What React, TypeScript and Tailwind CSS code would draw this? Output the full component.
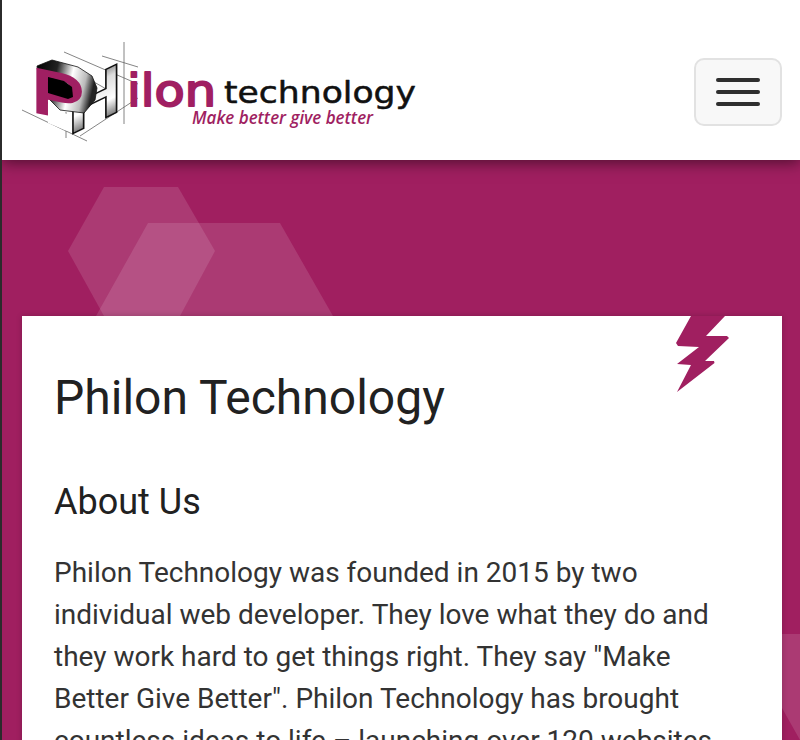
const bodyText =
  'Philon Technology was founded in 2015 by two individual web developer. They love what they do and they work hard to get things right. They say "Make Better Give Better". Philon Technology has brought countless ideas to life – launching over 120 websites and many more applications for clients all over the world.';

const Logo = () => (
  <svg width="400" height="110" viewBox="20 37 400 110" className="block">
    <defs>
      <linearGradient id="chrome" x1="0" y1="0" x2="1" y2="0.2">
        <stop offset="0" stopColor="#000" />
        <stop offset="0.35" stopColor="#222" />
        <stop offset="0.62" stopColor="#fff" />
        <stop offset="0.85" stopColor="#bbb" />
        <stop offset="1" stopColor="#222" />
      </linearGradient>
      <linearGradient id="post" x1="0" y1="0" x2="0" y2="1">
        <stop offset="0" stopColor="#333" />
        <stop offset="0.3" stopColor="#ddd" />
        <stop offset="0.6" stopColor="#fff" />
        <stop offset="0.85" stopColor="#666" />
        <stop offset="1" stopColor="#000" />
      </linearGradient>
    </defs>
    {/* construction lines */}
    <g stroke="#666" strokeWidth="0.8">
      <line x1="124" y1="42" x2="124" y2="124" />
      <line x1="64" y1="52" x2="138" y2="84" />
      <line x1="102" y1="56" x2="138" y2="67" />
      <line x1="22" y1="110" x2="87" y2="141" />
      <line x1="66" y1="112" x2="66" y2="138" />
      <line x1="80" y1="136" x2="138" y2="98" />
      <line x1="94" y1="82" x2="108" y2="90" />
    </g>
    {/* 3D H */}
    <text
      transform="translate(68 136) skewY(-26) scale(1.06 1)"
      fontFamily="'Liberation Sans', sans-serif"
      fontWeight="700"
      fontSize="70"
      fill="url(#post)"
      stroke="#111"
      strokeWidth="1.6"
    >
      H
    </text>
    {/* P extrusion, face, counter */}
    <polygon points="37,66 52,60 78,67 92,76 97,88 95,100 84,113 60,110 40,90" fill="url(#chrome)" stroke="#111" strokeWidth="0.8" />
    <polygon points="48,108 67,114 67,131 48,123" fill="#fff" />
    <text
      transform="translate(31 112) skewY(12) scale(1.22 1)"
      fontFamily="'Liberation Sans', sans-serif"
      fontWeight="700"
      fontSize="66"
      fill="#a01f62"
    >
      P
    </text>
    <polygon points="48,77 64,81 72,87 73,97 68,99 48,93" fill="#000" />
    <g fontFamily="'DejaVu Sans', sans-serif">
      <text x="127" y="106" fontSize="44" fill="#a01f62" stroke="#a01f62" strokeWidth="2" strokeLinejoin="round" textLength="89" lengthAdjust="spacingAndGlyphs">
        ilon
      </text>
      <text x="224" y="103" fontSize="30" fill="#111" stroke="#111" strokeWidth="0.5" strokeLinejoin="round" textLength="192" lengthAdjust="spacingAndGlyphs">
        technology
      </text>
    </g>
    <text x="192" y="124" fontFamily="'Open Sans', sans-serif" fontStyle="italic" fontWeight="600" fontSize="18" fill="#a01f62" textLength="181" lengthAdjust="spacingAndGlyphs">
      Make better give better
    </text>
  </svg>
);

export default function App() {
  return (
    <div className="relative h-[740px] overflow-hidden border-l-2 border-[#2b2b2b] font-['Roboto',sans-serif]">
      <header className="relative z-10 flex h-40 items-center justify-between bg-white pl-[18px] pr-[18px] pt-6 shadow-[0_3px_14px_rgba(0,0,0,0.5)]">
        <Logo />
        <button className="flex h-[68px] w-[88px] flex-col items-center justify-center gap-2 rounded-[10px] border-2 border-[#e2e2e2] bg-[#f8f8f8]">
          <span className="h-1 w-11 rounded-full bg-[#2f2f2f]" />
          <span className="h-1 w-11 rounded-full bg-[#2f2f2f]" />
          <span className="h-1 w-11 rounded-full bg-[#2f2f2f]" />
        </button>
      </header>

      <main className="relative h-[580px] bg-[#a01f60] pl-5 pr-[18px] pt-[156px]">
        {/* background hexagons */}
        <svg className="absolute left-0 top-0" width="798" height="580" viewBox="2 160 798 580">
          <polygon points="104,187 178,187 215,251 180,316 104,316 68,251" fill="#fff" fillOpacity="0.12" />
          <polygon points="148,223 280,223 333,316 96,316" fill="#fff" fillOpacity="0.12" />
          <polygon points="740,634 830,634 880,740 800,740 782,708" fill="#fff" fillOpacity="0.12" />
        </svg>

        <section className="relative bg-white px-8 pt-[47px] text-[#212121] shadow-[0_0_6px_rgba(0,0,0,0.2)]">
          {/* bolt */}
          <svg className="absolute left-[654px] top-0" width="54" height="78" viewBox="676 316 54 78">
            <polygon
              points="691,316 725,316 706,336 727,336 729,338 705,361 714,361 714.5,363 677,392 691,365 677,364 699,347 678,346 676,343"
              fill="#a01f60"
            />
          </svg>
          <h1 className="text-[48px] font-normal leading-[70px]">Philon Technology</h1>
          <h2 className="mt-11 text-[36px] font-normal leading-[50px]">About Us</h2>
          <p className="mt-[25px] text-[28px] leading-[42px] text-[#333]">{bodyText}</p>
        </section>
      </main>
    </div>
  );
}
